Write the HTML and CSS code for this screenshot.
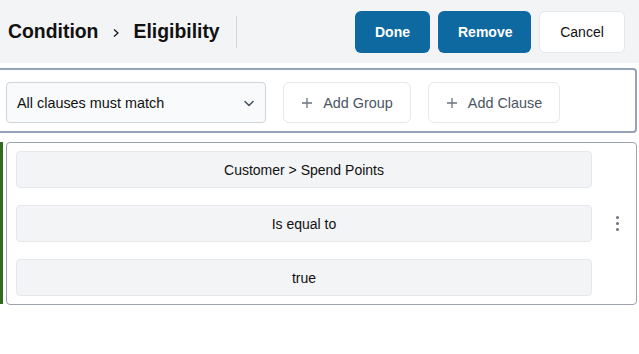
FILE: index.html
```html
<!DOCTYPE html>
<html lang="en">
<head>
    <meta charset="UTF-8">
    <meta name="viewport" content="width=device-width, initial-scale=1.0">
    <title>Condition - Eligibility</title>
    <link rel="stylesheet" href="styles.css">
</head>
<body>
    <div class="editor-header">
        <div class="breadcrumb">
            <span>Condition</span>
            <svg class="crumb-sep" width="6" height="10" viewBox="0 0 6 10"><path d="M1 1.5l4 3.5-4 3.5" fill="none" stroke="#111" stroke-width="1.2"/></svg>
            <span>Eligibility</span>
        </div>
        <div class="header-divider"></div>
        <div class="header-actions">
            <button class="btn btn-primary">Done</button>
            <button class="btn btn-primary">Remove</button>
            <button class="btn btn-secondary">Cancel</button>
        </div>
    </div>

    <div class="toolbar">
        <div class="match-select">
            <span>All clauses must match</span>
            <svg class="chevron" width="14" height="14" viewBox="0 0 14 14"><path d="M3 5.5l4 4 4-4" fill="none" stroke="#4b5563" stroke-width="1.6" stroke-linecap="round" stroke-linejoin="round"/></svg>
        </div>
        <button class="btn-add add-group">
            <svg width="12" height="12" viewBox="0 0 12 12"><path d="M6 1v10M1 6h10" stroke="#6b7280" stroke-width="1.3"/></svg>
            Add Group
        </button>
        <button class="btn-add add-clause">
            <svg width="12" height="12" viewBox="0 0 12 12"><path d="M6 1v10M1 6h10" stroke="#6b7280" stroke-width="1.3"/></svg>
            Add Clause
        </button>
    </div>

    <div class="clause-row">
        <div class="clause-marker"></div>
        <div class="clause">
            <div class="clause-fields">
                <div class="clause-field">Customer &gt; Spend Points</div>
                <div class="clause-field">Is equal to</div>
                <div class="clause-field">true</div>
            </div>
            <div class="clause-menu">
                <span class="dot"></span>
                <span class="dot"></span>
                <span class="dot"></span>
            </div>
        </div>
    </div>
</body>
</html>
```

FILE: styles.css
```css
* {
    margin: 0;
    padding: 0;
    box-sizing: border-box;
}

body {
    font-family: 'Liberation Sans', Arial, sans-serif;
    background: white;
    color: #111827;
    width: 639px;
    overflow: hidden;
}

.editor-header {
    height: 63px;
    background: #f3f4f6;
    display: flex;
    align-items: center;
    padding: 0 14px 0 8px;
}

.breadcrumb {
    display: flex;
    align-items: center;
    font-size: 19.4px;
    font-weight: bold;
    color: #111;
}

.crumb-sep {
    margin: 2px 14px 0 15px;
}

.header-divider {
    width: 1px;
    height: 32px;
    background: #d1d5db;
    margin-left: 16px;
}

.header-actions {
    margin-left: auto;
    display: flex;
    gap: 8px;
}

.btn {
    height: 42px;
    border-radius: 6px;
    font-family: inherit;
    font-size: 14px;
    padding: 0 20px;
    cursor: pointer;
}

.btn-primary {
    background: #0f69a1;
    color: white;
    border: none;
    font-weight: bold;
}

.btn-primary:first-child {
    width: 75px;
}

.btn-primary:nth-child(2) {
    width: 93px;
}

.btn-secondary {
    width: 86px;
    background: white;
    color: #111;
    border: 1px solid #e5e7eb;
}

.toolbar {
    margin: 5px 2px 0 -2px;
    height: 65px;
    border: 2px solid #94a3b8;
    border-radius: 0 4px 4px 0;
    display: flex;
    align-items: center;
    padding: 4px 6px 0;
    gap: 17px;
}

.match-select {
    width: 260px;
    height: 41px;
    background: #f9fafb;
    border: 1px solid #d1d5db;
    border-radius: 4px;
    display: flex;
    align-items: center;
    justify-content: space-between;
    padding: 0 9px 0 10px;
    font-size: 14.4px;
    color: #111;
}

.btn-add {
    height: 41px;
    background: white;
    border: 1px solid #e5e7eb;
    border-radius: 6px;
    font-family: inherit;
    font-size: 14.4px;
    color: #4b5563;
    display: flex;
    align-items: center;
    justify-content: center;
    gap: 10px;
}

.add-group {
    width: 128px;
}

.add-clause {
    width: 132px;
}

.clause-row {
    display: flex;
    margin-top: 9px;
    padding-right: 2px;
}

.clause-marker {
    width: 3px;
    height: 162px;
    background: #2e6b1f;
    margin-right: 3px;
}

.clause {
    flex: 1;
    height: 163px;
    border: 1px solid #9ca3af;
    border-radius: 4px;
    display: flex;
    align-items: center;
    padding: 8px 0 8px 9px;
}

.clause-fields {
    width: 576px;
    display: flex;
    flex-direction: column;
    gap: 17px;
}

.clause-field {
    height: 37px;
    background: #f3f4f6;
    border: 1px solid #e5e7eb;
    border-radius: 4px;
    display: flex;
    align-items: center;
    justify-content: center;
    font-size: 14px;
    color: #111;
}

.clause-menu {
    flex: 1;
    display: flex;
    flex-direction: column;
    align-items: center;
    padding-left: 6px;
    gap: 3px;
}

.dot {
    width: 3px;
    height: 3px;
    border-radius: 50%;
    background: #6b7280;
}
```
